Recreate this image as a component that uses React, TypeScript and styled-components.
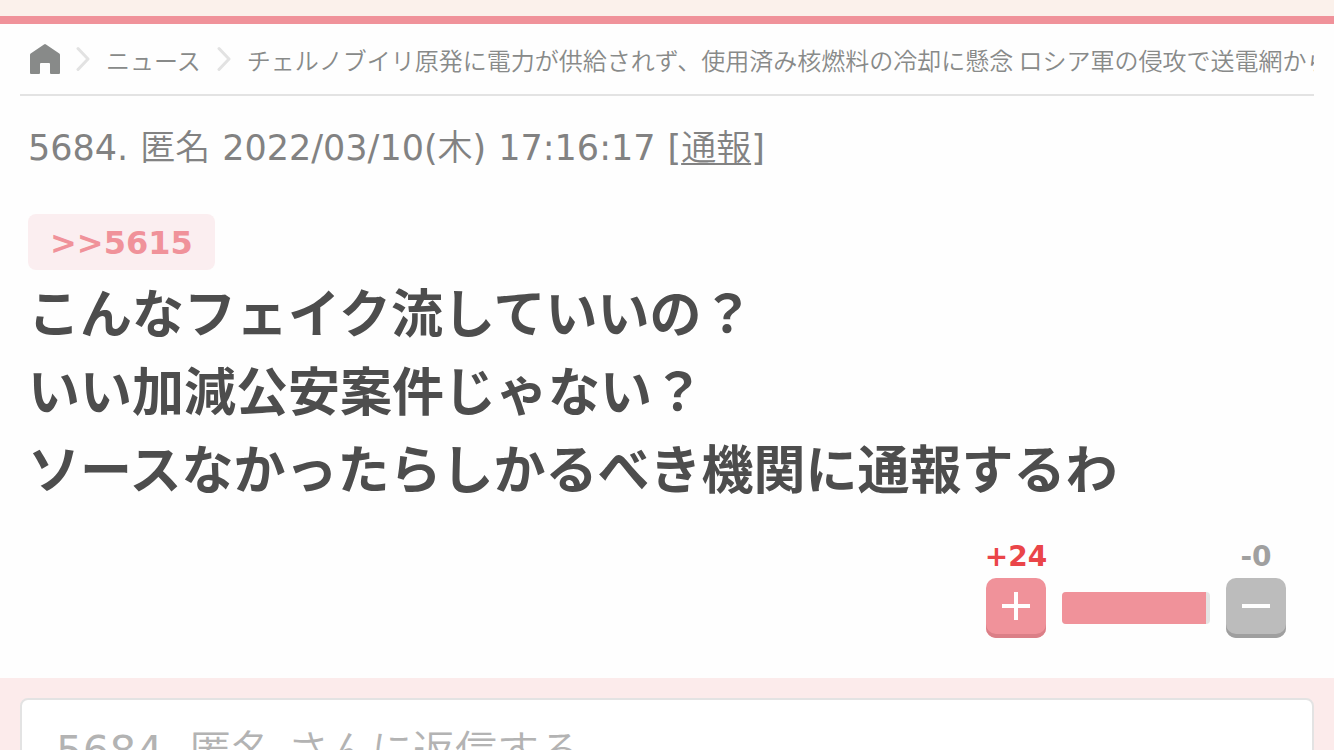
import React from "react";
import styled, { createGlobalStyle } from "styled-components";

const japanese = `"Noto Sans CJK JP DemiLight", "Noto Sans CJK JP", sans-serif`;
const latin = `"DejaVu Sans", Verdana, ${japanese}`;
const pink = "#f0929a";

const GlobalStyle = createGlobalStyle`
  *, *::before, *::after { box-sizing: border-box; }
  body {
    margin: 0;
    background: #fefefe;
    color: #4d4d4d;
    font-family: ${latin};
  }
  a { color: inherit; }
`;

const TopBar = styled.header`
  height: 24px;
  background: #fbf1eb;
  border-bottom: 8px solid ${pink};
`;

const Breadcrumb = styled.nav`
  margin: 0 20px;
  border-bottom: 2px solid #e3e3e3;
  overflow: hidden;
`;

const CrumbList = styled.ol`
  display: flex;
  align-items: center;
  height: 70px;
  margin: 0;
  padding: 0 0 0 10px;
  list-style: none;
  font: 350 24px/36px "Noto Sans CJK JP", sans-serif;
  color: #888a89;
  white-space: nowrap;
`;

const Crumb = styled.li`
  display: flex;
  align-items: center;
  flex: none;
`;

const CrumbLink = styled.a`
  display: block;
  text-decoration: none;
`;

const CrumbText = styled(CrumbLink)`
  padding-top: 2px;
`;

const HomeIcon = styled.svg`
  display: block;
  width: 30px;
  height: 30px;
`;

const Chevron = styled.svg`
  width: 14px;
  height: 26px;
  margin: 0 16px;
`;

const Comment = styled.article`
  padding: 28px 28px 40px;
`;

const Meta = styled.header`
  display: flex;
  gap: 12px;
  font-size: 35px;
  line-height: 48px;
  color: #828282;
  white-space: nowrap;
`;

const ReportLink = styled.a`
  text-decoration: underline;
  text-decoration-thickness: 2px;
  text-underline-offset: 3px;
`;

const Anchor = styled.a`
  display: block;
  width: fit-content;
  margin-top: 42px;
  padding: 2px 22px 0;
  border-radius: 8px;
  background: #fbeef0;
  color: ${pink};
  font-size: 32px;
  font-weight: 700;
  line-height: 54px;
  text-decoration: none;
`;

const Body = styled.p`
  margin: 2px 0 0;
  font: 700 52px/78px "Noto Sans CJK JP", sans-serif;
`;

const Votes = styled.div`
  display: flex;
  justify-content: flex-end;
  align-items: flex-end;
  gap: 16px;
  margin-top: 32px;
  padding-right: 20px;
`;

const Vote = styled.div`
  display: flex;
  flex-direction: column;
  align-items: center;
  width: 60px;
`;

const Count = styled.span<{ $color: string }>`
  height: 40px;
  color: ${({ $color }) => $color};
  font-size: 28px;
  font-weight: 700;
  line-height: 38px;
  white-space: nowrap;
`;

const VoteButton = styled.button<{ $face: string; $edge: string }>`
  display: grid;
  place-items: center;
  width: 60px;
  height: 60px;
  padding: 0;
  border: 0;
  border-radius: 10px;
  background: ${({ $face }) => $face};
  box-shadow: inset 0 -4px 0 ${({ $edge }) => $edge};
  cursor: pointer;
`;

const Sign = styled.svg`
  width: 28px;
  height: 28px;
  margin-bottom: 4px;
`;

const Meter = styled.div`
  width: 148px;
  height: 32px;
  margin-bottom: 14px;
  border-radius: 4px;
  background: #e4e4e4;
  overflow: hidden;
`;

const MeterFill = styled.div`
  height: 100%;
  background: ${pink};
`;

const ReplyForm = styled.form`
  padding: 20px;
  background: #fcebeb;
`;

const ReplyBox = styled.textarea`
  display: block;
  width: 100%;
  height: 180px;
  padding: 20px 34px;
  border: 2px solid #e3e3e3;
  border-radius: 8px;
  background: #fff;
  color: #4d4d4d;
  font: 400 42px/64px ${latin};
  resize: none;
  &::placeholder { color: #b3b3b3; opacity: 1; }
`;

function Separator() {
  return (
    <Chevron viewBox="0 0 14 26" fill="none" stroke="#e2e2e2" strokeWidth="3" strokeLinecap="round" strokeLinejoin="round" aria-hidden="true">
      <path d="M2 2.5 12 13 2 23.5" />
    </Chevron>
  );
}

export default function App() {
  const plus = 24;
  const minus = 0;
  const share = (plus + 0.5) / (plus + minus + 1.2);

  return (
    <>
      <GlobalStyle />
      <TopBar />
      <Breadcrumb aria-label="パンくず">
        <CrumbList>
          <Crumb>
            <CrumbLink href="#home" aria-label="ホーム">
              <HomeIcon viewBox="0 0 30 30" fill="#888a89">
                <path d="M14 .4Q15-.4 16 .4L29.3 9.6Q30 10.1 30 11V29Q30 30 29 30H21Q20 30 20 29V20Q20 19 19 19H11Q10 19 10 20V29Q10 30 9 30H1Q0 30 0 29V11Q0 10.1.7 9.6Z" />
              </HomeIcon>
            </CrumbLink>
          </Crumb>
          <Crumb>
            <Separator />
            <CrumbText href="#news">ニュース</CrumbText>
          </Crumb>
          <Crumb>
            <Separator />
            <CrumbText href="#topic">
              チェルノブイリ原発に電力が供給されず、使用済み核燃料の冷却に懸念 ロシア軍の侵攻で送電網から切断
            </CrumbText>
          </Crumb>
        </CrumbList>
      </Breadcrumb>

      <main>
        <Comment>
          <Meta>
            <span>5684.</span>
            <span>匿名</span>
            <time dateTime="2022-03-10">2022/03/10(木)</time>
            <time dateTime="17:16:17">17:16:17</time>
            <span>
              [<ReportLink href="#report">通報</ReportLink>]
            </span>
          </Meta>
          <Anchor href="#5615">&gt;&gt;5615</Anchor>
          <Body>
            こんなフェイク流していいの？
            <br />
            いい加減公安案件じゃない？
            <br />
            ソースなかったらしかるべき機関に通報するわ
          </Body>
          <Votes>
            <Vote>
              <Count $color="#ea4549">+{plus}</Count>
              <VoteButton type="button" aria-label="プラス" $face={pink} $edge="#db7f87">
                <Sign viewBox="0 0 28 28" stroke="#fff" strokeWidth="4" aria-hidden="true">
                  <path d="M0 14H28M14 0V28" />
                </Sign>
              </VoteButton>
            </Vote>
            <Meter>
              <MeterFill style={{ width: `${share * 100}%` }} />
            </Meter>
            <Vote>
              <Count $color="#a0a0a0">-{minus}</Count>
              <VoteButton type="button" aria-label="マイナス" $face="#bcbcbc" $edge="#9f9f9f">
                <Sign viewBox="0 0 28 28" stroke="#fff" strokeWidth="4" aria-hidden="true">
                  <path d="M0 14H28" />
                </Sign>
              </VoteButton>
            </Vote>
          </Votes>
        </Comment>
        <ReplyForm>
          <ReplyBox aria-label="返信" placeholder="5684. 匿名 さんに返信する" />
        </ReplyForm>
      </main>
    </>
  );
}
